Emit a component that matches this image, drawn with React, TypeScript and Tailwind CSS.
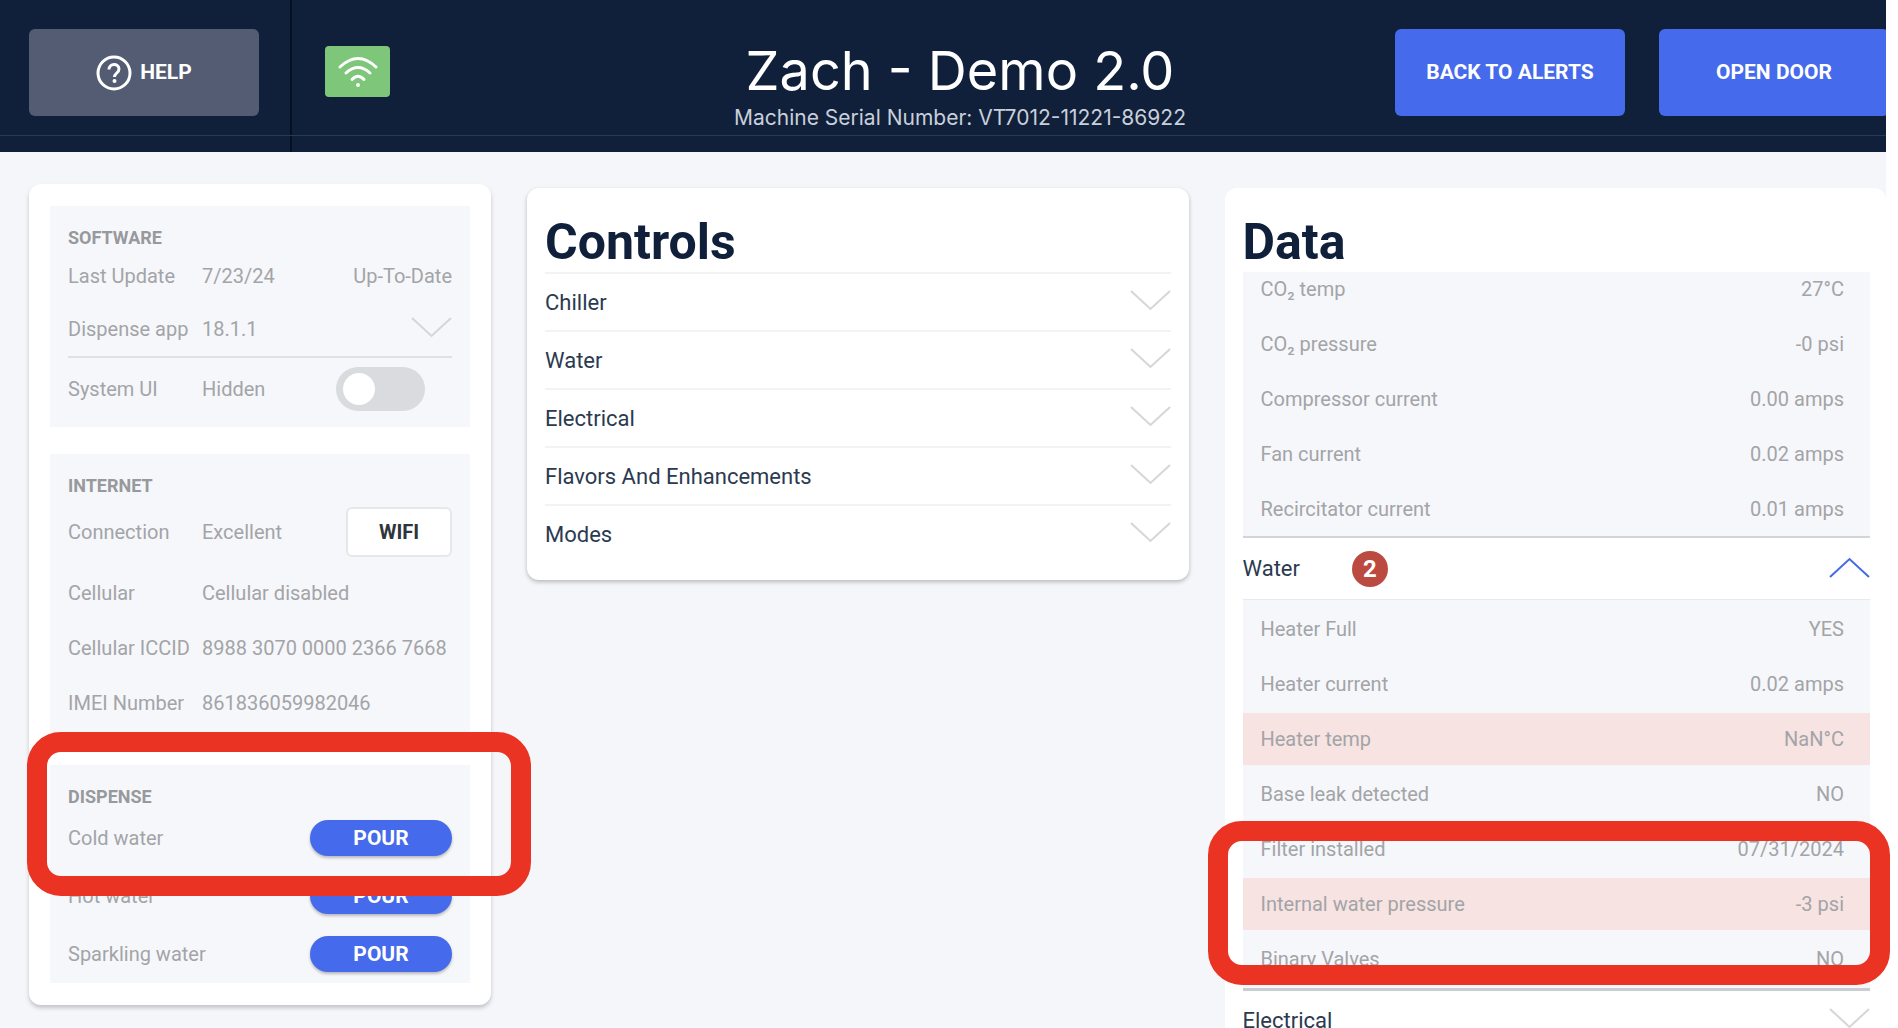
import { useState } from "react";
import type { ReactNode } from "react";

const CONTROLS = ["Chiller", "Water", "Electrical", "Flavors And Enhancements", "Modes"];

type Reading = { label: string; value: string; alert?: boolean };

const CHILLER: Reading[] = [
  { label: "CO₂ temp", value: "27°C" },
  { label: "CO₂ pressure", value: "-0 psi" },
  { label: "Compressor current", value: "0.00 amps" },
  { label: "Fan current", value: "0.02 amps" },
  { label: "Recircitator current", value: "0.01 amps" },
];

const WATER: Reading[] = [
  { label: "Heater Full", value: "YES" },
  { label: "Heater current", value: "0.02 amps" },
  { label: "Heater temp", value: "NaN°C", alert: true },
  { label: "Base leak detected", value: "NO" },
  { label: "Filter installed", value: "07/31/2024" },
  { label: "Internal water pressure", value: "-3 psi", alert: true },
  { label: "Binary Valves", value: "NO" },
];

const DRINKS = ["Cold water", "Hot water", "Sparkling water"];

function Chevron({ up = false }: { up?: boolean }) {
  return (
    <svg
      width="41" height="24" viewBox="0 0 41 24" fill="none" strokeWidth="2"
      className={up ? "shrink-0 stroke-[#456ae6]" : "shrink-0 stroke-[#d5d6d9]"}
    >
      <path d={up ? "M1 20 L20.5 2 L40 20" : "M1 1 L20.5 19 L40 1"} />
    </svg>
  );
}

function HelpIcon() {
  return (
    <svg width="36" height="36" viewBox="0 0 36 36" fill="none" stroke="currentColor">
      <circle cx="18" cy="18" r="16" strokeWidth="3" />
      <path d="M13 14.5 C13 8 23 8 23 14 C23 18 18.5 18 18.5 22" strokeWidth="3" />
      <circle cx="18.5" cy="26" r="1" strokeWidth="2" />
    </svg>
  );
}

function WifiIcon() {
  return (
    <svg width="40" height="34" viewBox="0 0 40 34" fill="none" stroke="#fff" strokeWidth="3" strokeLinecap="round">
      <path d="M2 12 Q20 -5 38 12" />
      <path d="M8 18 Q20 7 32 18" />
      <path d="M14 24.5 Q20 18 26 24.5" />
      <circle cx="20" cy="30" r="2" fill="#fff" stroke="none" />
    </svg>
  );
}

function Section({ title, children }: { title: string; children: ReactNode }) {
  return (
    <section className="bg-[#f6f7fb] px-[18px]">
      <h3 className="pt-5 text-lg leading-6 font-bold text-[#98999c]">{title}</h3>
      {children}
    </section>
  );
}

function InfoRow({ label, value, className, children }: {
  label: string;
  value?: string;
  className: string;
  children?: ReactNode;
}) {
  return (
    <div className={`flex items-center ${className}`}>
      <span className="w-[134px] shrink-0 whitespace-nowrap">{label}</span>
      <span className="flex-1 whitespace-nowrap">{value}</span>
      {children}
    </div>
  );
}

function Readings({ rows }: { rows: Reading[] }) {
  return (
    <table className="w-full border-separate border-spacing-x-0 border-spacing-y-[3px] bg-[#f6f7fb] text-xl text-[#a3a4a7]">
      <tbody>
        {rows.map(r => (
          <tr key={r.label} className={r.alert ? "bg-[#f6e3e2]" : ""}>
            <th scope="row" className="h-[52px] p-0 pl-[18px] text-left font-normal">{r.label}</th>
            <td className="p-0 pr-[26px] text-right">{r.value}</td>
          </tr>
        ))}
      </tbody>
    </table>
  );
}

export default function App() {
  const [showSystemUi, setShowSystemUi] = useState(false);

  return (
    <div className="relative h-screen overflow-hidden bg-white pr-3 font-[Roboto,sans-serif]">
      <div className="flex h-full flex-col overflow-hidden bg-[#f5f6fa]">

        {/* Header */}
        <header className="relative flex h-[152px] shrink-0 bg-[#10203a] text-white">
          <div className="w-[292px] shrink-0 border-r-2 border-[#071020] pt-[29px] pl-[29px]">
            <button className="flex h-[87px] w-[230px] items-center justify-center gap-2 rounded-md bg-[#545c73] text-[21px] font-bold">
              <HelpIcon />
              HELP
            </button>
          </div>
          <div className="w-[233px] shrink-0 pt-[46px] pl-[33px]">
            <div className="flex h-[51px] w-[65px] items-center justify-center rounded-sm bg-[#7ec67a]">
              <WifiIcon />
            </div>
          </div>
          <div className="flex-1 pt-10 text-center font-[Inter,sans-serif] whitespace-nowrap">
            <h1 className="text-[54px] leading-[62px]">Zach - Demo 2.0</h1>
            <p className="text-[21px] leading-8 text-[#c9cfdb]">
              Machine Serial Number: VT7012-11221-86922
            </p>
          </div>
          <div className="-mr-[3px] flex shrink-0 gap-[34px] pt-[29px] text-[21px] font-bold">
            <button className="h-[87px] w-[230px] rounded-md bg-[#456aeb]">BACK TO ALERTS</button>
            <button className="h-[87px] w-[230px] rounded-md bg-[#456aeb]">OPEN DOOR</button>
          </div>
          <div className="absolute inset-x-0 top-[135px] h-px bg-[#2b3950]" />
        </header>

        <main className="grid min-h-0 flex-1 grid-cols-[462px_1fr_1fr] items-start gap-9 pt-8 pl-[29px]">

          {/* Machine info */}
          <div className="flex flex-col gap-[27px] rounded-xl bg-white px-[21px] py-[22px] text-xl text-[#a3a4a7] shadow-[0_3px_4px_rgba(0,0,0,0.2)]">
            <Section title="SOFTWARE">
              <InfoRow label="Last Update" value="7/23/24" className="h-[52px]">
                <span>Up-To-Date</span>
              </InfoRow>
              <InfoRow label="Dispense app" value="18.1.1" className="h-[56px] border-b-2 border-[#e0e1e5]">
                <button aria-label="Dispense app details"><Chevron /></button>
              </InfoRow>
              <InfoRow label="System UI" value="Hidden" className="h-[69px] pb-2">
                <label className="mr-[27px] flex h-[44px] w-[89px] cursor-pointer items-center rounded-full bg-[#dadbdf] px-[7px]">
                  <input
                    type="checkbox"
                    aria-label="System UI"
                    className="peer sr-only"
                    checked={showSystemUi}
                    onChange={e => setShowSystemUi(e.target.checked)}
                  />
                  <span className="size-8 rounded-full bg-white peer-checked:ml-auto" />
                </label>
              </InfoRow>
            </Section>

            <Section title="INTERNET">
              <InfoRow label="Connection" value="Excellent" className="h-[67px]">
                <button className="h-[50px] w-[106px] rounded-md border-2 border-[#e6e7ea] bg-white font-bold text-[#30343c]">
                  WIFI
                </button>
              </InfoRow>
              <InfoRow label="Cellular" value="Cellular disabled" className="h-[55px]" />
              <InfoRow label="Cellular ICCID" value="8988 3070 0000 2366 7668" className="h-[55px]" />
              <InfoRow label="IMEI Number" value="861836059982046" className="mb-2 h-[55px]" />
            </Section>

            <Section title="DISPENSE">
              {DRINKS.map(d => (
                <InfoRow key={d} label={d} className="h-[58px]">
                  <button className="h-[36px] w-[142px] rounded-full bg-[#456aeb] text-[21px] leading-6 font-bold text-white shadow-[0_2px_3px_rgba(0,0,0,0.25)]">
                    POUR
                  </button>
                </InfoRow>
              ))}
            </Section>
          </div>

          {/* Controls */}
          <div className="mt-1 rounded-xl bg-white px-[18px] pb-[18px] text-[#2b3a50] shadow-[0_2px_4px_rgba(0,0,0,0.25)]">
            <h2 className="pt-[26px] pb-[2px] text-[50px] leading-[56px] font-bold text-[#10203a]">Controls</h2>
            {CONTROLS.map(c => (
              <button key={c} className="flex h-[58px] w-full items-center justify-between border-t-2 border-[#f2f3f5] text-[22px]">
                {c}
                <Chevron />
              </button>
            ))}
          </div>

          {/* Data */}
          <div className="mt-1 rounded-t-xl bg-white pr-4 pl-[18px] text-[22px] text-[#2b3a50]">
            <h2 className="pt-[26px] pb-[2px] text-[50px] leading-[56px] font-bold text-[#10203a]">Data</h2>
            <div className="overflow-hidden border-b-2 border-[#d3d5d8]">
              <div className="-mt-3 -mb-0.5">
                <Readings rows={CHILLER} />
              </div>
            </div>
            <button className="flex h-[62px] w-full items-center border-b border-[#e8e9ec]">
              Water
              <span className="ml-[52px] flex size-[36px] items-center justify-center rounded-full bg-[#bb4b40] text-2xl font-bold text-white">
                2
              </span>
              <span className="ml-auto"><Chevron up /></span>
            </button>
            <div className="border-b-3 border-[#cbcccf]">
              <Readings rows={WATER} />
            </div>
            <button className="flex h-[58px] w-full items-center justify-between">
              Electrical
              <Chevron />
            </button>
          </div>
        </main>
      </div>

      {/* Callouts */}
      <div className="pointer-events-none absolute top-[732px] left-[27px] h-[164px] w-[504px] rounded-[34px] border-20 border-[#ea3323]" />
      <div className="pointer-events-none absolute top-[821px] right-2 h-[164px] w-[682px] rounded-[34px] border-20 border-[#ea3323]" />
    </div>
  );
}
